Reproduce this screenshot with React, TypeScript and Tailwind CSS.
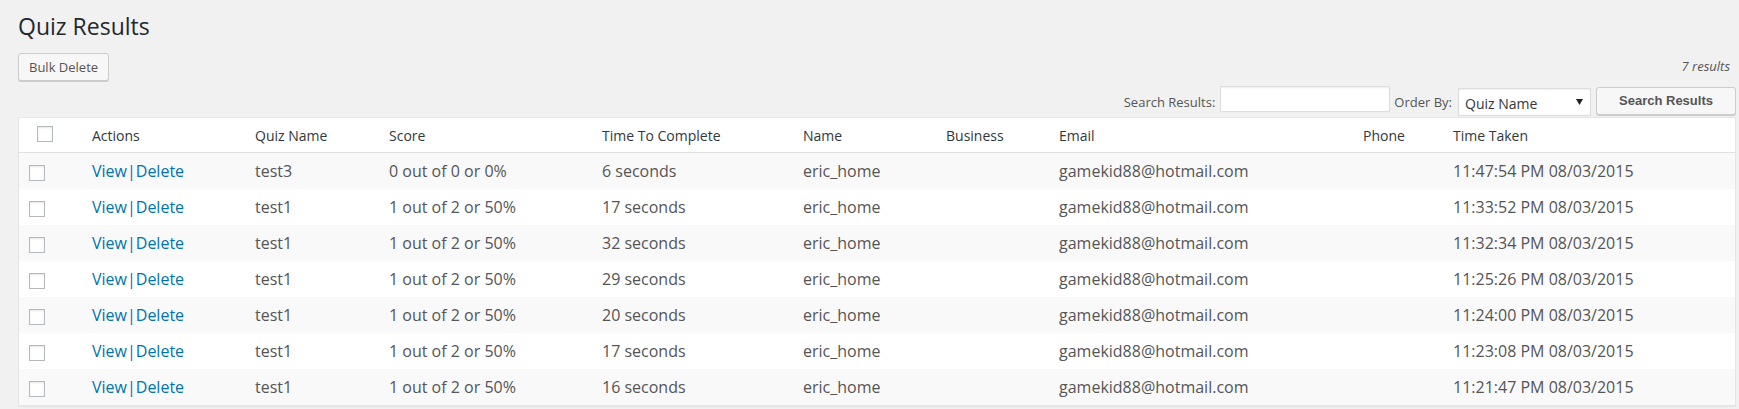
import React from "react";

type Result = {
  quiz: string;
  score: string;
  time: string;
  name: string;
  email: string;
  taken: string;
};

const results: Result[] = [
  { quiz: "test3", score: "0 out of 0 or 0%", time: "6 seconds", name: "eric_home", email: "gamekid88@hotmail.com", taken: "11:47:54 PM 08/03/2015" },
  { quiz: "test1", score: "1 out of 2 or 50%", time: "17 seconds", name: "eric_home", email: "gamekid88@hotmail.com", taken: "11:33:52 PM 08/03/2015" },
  { quiz: "test1", score: "1 out of 2 or 50%", time: "32 seconds", name: "eric_home", email: "gamekid88@hotmail.com", taken: "11:32:34 PM 08/03/2015" },
  { quiz: "test1", score: "1 out of 2 or 50%", time: "29 seconds", name: "eric_home", email: "gamekid88@hotmail.com", taken: "11:25:26 PM 08/03/2015" },
  { quiz: "test1", score: "1 out of 2 or 50%", time: "20 seconds", name: "eric_home", email: "gamekid88@hotmail.com", taken: "11:24:00 PM 08/03/2015" },
  { quiz: "test1", score: "1 out of 2 or 50%", time: "17 seconds", name: "eric_home", email: "gamekid88@hotmail.com", taken: "11:23:08 PM 08/03/2015" },
  { quiz: "test1", score: "1 out of 2 or 50%", time: "16 seconds", name: "eric_home", email: "gamekid88@hotmail.com", taken: "11:21:47 PM 08/03/2015" },
];

const columns = ["Actions", "Quiz Name", "Score", "Time To Complete", "Name", "Business", "Email", "Phone", "Time Taken"];

function Checkbox({ className = "" }: { className?: string }) {
  return (
    <input
      type="checkbox"
      className={
        "m-0 block h-4 w-4 appearance-none border border-[#b4b9be] bg-white shadow-[inset_0_1px_2px_rgba(0,0,0,0.1)] " +
        className
      }
    />
  );
}

export default function App() {
  return (
    <div className="min-h-[409px] bg-[#f1f1f1] pl-[18px] pr-[3px] font-['Open_Sans',sans-serif] text-[#555]">
      <h1 className="pt-[11px] text-[23px] leading-[30px] font-normal text-[#23282d]">
        Quiz Results
      </h1>

      <div className="flex items-start justify-between">
        <button className="mt-[12px] h-[28px] rounded-[3px] border border-[#ccc] bg-[#f7f7f7] px-[10px] pb-px text-[13px] leading-[26px] text-[#555] shadow-[0_1px_0_#ccc]">
          Bulk Delete
        </button>

        <div className="flex flex-col items-end">
          <div className="mt-[16px] pr-[6px] text-[13px] leading-[18px] italic text-[#555]">
            7 results
          </div>
          <div className="mt-[11px] flex items-start">
            <span className="mt-[7px] text-[13px] leading-[18px] text-[#555]">
              Search Results:
            </span>
            <input
              type="text"
              className="ml-[5px] h-[26px] w-[170px] border border-[#ddd] bg-white shadow-[inset_0_1px_2px_rgba(0,0,0,0.07)] outline-none"
            />
            <span className="mt-[7px] ml-[4px] text-[13px] leading-[18px] text-[#555]">
              Order By:
            </span>
            <div className="mt-[2px] ml-[6px] flex h-[28px] w-[133px] items-center justify-between border border-[#ddd] bg-white pl-[6px] pr-[7px] shadow-[inset_0_1px_2px_rgba(0,0,0,0.07)]">
              <span className="pt-[2px] text-[14px] text-[#32373c]">Quiz Name</span>
              <svg width="7" height="6" viewBox="0 0 7 6">
                <path d="M0 0h7L3.5 6z" fill="#222" />
              </svg>
            </div>
            <button className="mt-[1px] ml-[5px] h-[28px] w-[140px] rounded-[3px] border border-[#ccc] bg-[#f7f7f7] font-['Liberation_Sans',Arial,sans-serif] text-[13px] font-bold text-[#555] shadow-[0_1px_0_#ccc]">
              Search Results
            </button>
          </div>
        </div>
      </div>

      <table className="mt-px w-full table-fixed border-separate border-spacing-0 border border-[#e5e5e5] bg-white shadow-[0_1px_1px_rgba(0,0,0,0.04)]">
        <colgroup>
          <col className="w-[73px]" />
          <col className="w-[163px]" />
          <col className="w-[134px]" />
          <col className="w-[213px]" />
          <col className="w-[201px]" />
          <col className="w-[143px]" />
          <col className="w-[113px]" />
          <col className="w-[304px]" />
          <col className="w-[90px]" />
          <col />
        </colgroup>
        <thead>
          <tr className="text-left text-[14px] text-[#32373c]">
            <th className="h-[35px] border-b border-[#e1e1e1] p-0 align-middle font-normal">
              <Checkbox className="mb-[3px] ml-[18px]" />
            </th>
            {columns.map((h) => (
              <th key={h} className="h-[35px] border-b border-[#e1e1e1] p-0 align-middle font-normal">
                {h}
              </th>
            ))}
          </tr>
        </thead>
        <tbody>
          {results.map((r, i) => (
            <tr key={i} className={i % 2 === 0 ? "bg-[#f9f9f9]" : "bg-white"}>
              <td className="h-[36px] p-0 align-middle">
                <Checkbox className="mt-[4px] ml-[10px]" />
              </td>
              <td className="h-[36px] p-0 align-middle text-[16px] text-[#0073aa]">
                <a href="#">View</a>|<a href="#">Delete</a>
              </td>
              <td className="p-0 align-middle text-[16px]">{r.quiz}</td>
              <td className="p-0 align-middle text-[16px]">{r.score}</td>
              <td className="p-0 align-middle text-[16px]">{r.time}</td>
              <td className="p-0 align-middle text-[16px]">{r.name}</td>
              <td className="p-0 align-middle text-[16px]"></td>
              <td className="p-0 align-middle text-[16px]">{r.email}</td>
              <td className="p-0 align-middle text-[16px]"></td>
              <td className="p-0 align-middle text-[16px]">{r.taken}</td>
            </tr>
          ))}
        </tbody>
      </table>
    </div>
  );
}
